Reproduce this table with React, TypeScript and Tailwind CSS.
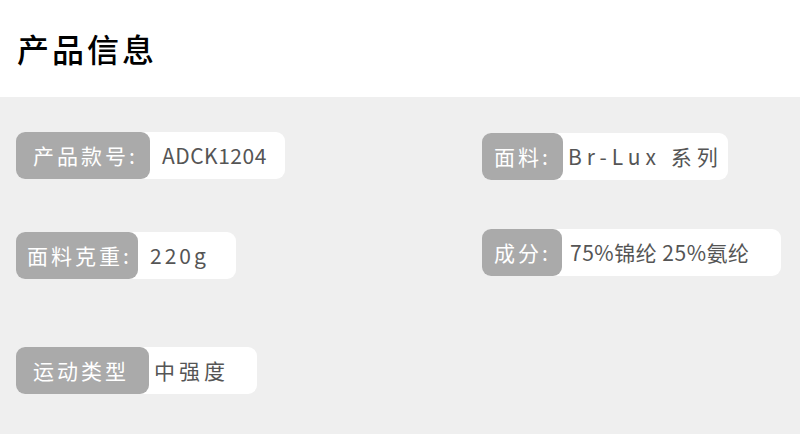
const font = { fontFamily: '"Noto Sans CJK SC", "Noto Sans", sans-serif' };

type Item = {
  label: string;
  value: string;
  labelW: string;
  boxW: string;
  labelPad: string;
  valueCls: string;
  mt: string;
};

const left: Item[] = [
  { label: '产品款号:', value: 'ADCK1204', labelW: 'w-[134px]', boxW: 'w-[269px]', labelPad: 'pl-[17px]', valueCls: 'pl-[12px] tracking-[0.5px]', mt: 'mt-0' },
  { label: '面料克重:', value: '220g', labelW: 'w-[122px]', boxW: 'w-[220px]', labelPad: 'pl-[11px]', valueCls: 'pl-[12px] tracking-[3px]', mt: 'mt-[53px]' },
  { label: '运动类型', value: '中强度', labelW: 'w-[133px]', boxW: 'w-[241px]', labelPad: 'pl-[17px]', valueCls: 'pl-[5px] tracking-[4px]', mt: 'mt-[68px]' },
];

const right: Item[] = [
  { label: '面料:', value: 'Br-Lux 系列', labelW: 'w-[81px]', boxW: 'w-[246px]', labelPad: 'pl-[12px]', valueCls: 'pl-[5px] tracking-[5px]', mt: 'mt-px' },
  { label: '成分:', value: '75%锦纶 25%氨纶', labelW: 'w-[80px]', boxW: 'w-[299px]', labelPad: 'pl-[12px]', valueCls: 'pl-[8px] tracking-[0.5px]', mt: 'mt-[49px]' },
];

function Pill({ item }: { item: Item }) {
  return (
    <div className={`${item.mt} ${item.boxW} h-[47px] flex items-center bg-white rounded-[9px]`}>
      <div
        className={`${item.labelW} ${item.labelPad} h-full shrink-0 flex items-center bg-[#aaaaaa] rounded-[9px] text-white text-[21px] tracking-[3px] whitespace-nowrap`}
      >
        {item.label}
      </div>
      <div className={`${item.valueCls} text-[#555555] text-[21px] whitespace-nowrap`}>{item.value}</div>
    </div>
  );
}

export default function App() {
  return (
    <div className="w-[800px] h-[434px] bg-[#efefef] flex flex-col overflow-hidden" style={font}>
      <div className="h-[97px] bg-white flex items-center pl-[17px] pb-[2px]">
        <h1 className="text-[32px] font-medium text-black tracking-[3px] leading-none">产品信息</h1>
      </div>
      <div className="flex pt-[35px]">
        <div className="w-[482px] shrink-0 pl-[16px] flex flex-col">
          {left.map((it) => (
            <Pill key={it.label} item={it} />
          ))}
        </div>
        <div className="flex flex-col">
          {right.map((it) => (
            <Pill key={it.label} item={it} />
          ))}
        </div>
      </div>
    </div>
  );
}
